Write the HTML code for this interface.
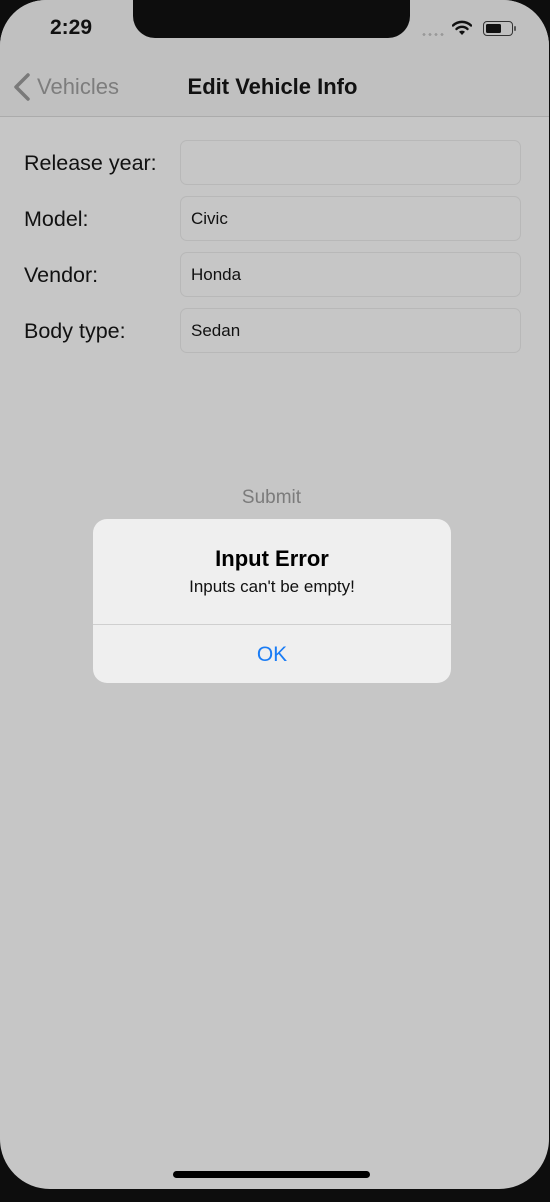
<!DOCTYPE html>
<html><head><style>
body{margin:0;width:550px;height:1202px;background:#0d0d0d;overflow:hidden;position:relative;font-family:"Liberation Sans",sans-serif}
.screen{position:absolute;left:0;top:0;width:549px;height:1189px;background:#c6c6c6;border-radius:46px 46px 50px 50px;overflow:hidden}
.nav{position:absolute;left:0;top:0;width:100%;height:116px;background:#c0c0c0;border-bottom:1px solid #ababab}
.notch{position:absolute;left:133px;top:-10px;width:277px;height:48px;background:#0d0d0d;border-radius:0 0 22px 22px}
.abs{position:absolute}
.lbl{position:absolute;left:24px;font-size:21.5px;color:#111}
.fld{position:absolute;left:180px;width:341px;height:45px;border:1px solid #b8b8b8;border-radius:7px;background:#c6c6c6;font-size:17px;color:#111;line-height:43px;padding-left:10px;box-sizing:border-box}
.alert{position:absolute;left:93px;top:519px;width:358px;height:164px;background:#efefef;border-radius:14px}
</style></head><body>
<div class="screen">
<div class="nav"></div>
<div class="notch"></div>
<div class="abs" style="left:50px;top:16px;font-size:21px;font-weight:bold;color:#111">2:29</div>
<div class="abs" style="left:421px;top:33px;width:24px;height:3px;background-image:radial-gradient(circle,#999 1.3px,transparent 1.5px);background-size:6px 3px"></div>
<svg class="abs" style="left:452px;top:19px" width="20" height="17" viewBox="0 0 20 17"><path d="M1 6.5A13 13 0 0 1 19 6.5" stroke="#111" stroke-width="2.4" fill="none" stroke-linecap="round"/><path d="M4.5 10A8 8 0 0 1 15.5 10" stroke="#111" stroke-width="2.4" fill="none" stroke-linecap="round"/><path d="M10 16L7 12.8A4.3 4.3 0 0 1 13 12.8Z" fill="#111"/></svg>
<div class="abs" style="left:483px;top:21px;width:30px;height:15px;border:1.5px solid #333;border-radius:4px;box-sizing:border-box"></div>
<div class="abs" style="left:486px;top:24px;width:15px;height:9px;background:#111;border-radius:1.5px"></div>
<div class="abs" style="left:514px;top:26px;width:2px;height:5px;background:#555;border-radius:1px"></div>
<svg class="abs" style="left:13px;top:73px" width="18" height="28" viewBox="0 0 18 28"><path d="M15 2L3 14L15 26" stroke="#7a7a7a" stroke-width="3.5" fill="none" stroke-linecap="round" stroke-linejoin="round"/></svg>
<div class="abs" style="left:37px;top:74px;font-size:22px;color:#7d7d7d">Vehicles</div>
<div class="abs" style="left:0;width:545px;text-align:center;top:74px;font-size:22px;font-weight:bold;color:#111">Edit Vehicle Info</div>
<div class="lbl" style="top:151px">Release year:</div><div class="fld" style="top:140px"></div>
<div class="lbl" style="top:207px">Model:</div><div class="fld" style="top:196px">Civic</div>
<div class="lbl" style="top:263px">Vendor:</div><div class="fld" style="top:252px">Honda</div>
<div class="lbl" style="top:319px">Body type:</div><div class="fld" style="top:308px">Sedan</div>
<div class="abs" style="left:0;width:543px;text-align:center;top:487px;font-size:19px;color:#7b7b7b">Submit</div>
<div class="alert">
<div class="abs" style="left:0;width:100%;text-align:center;top:27px;font-size:22px;font-weight:bold;color:#000">Input Error</div>
<div class="abs" style="left:0;width:100%;text-align:center;top:58px;font-size:17px;color:#111">Inputs can't be empty!</div>
<div class="abs" style="left:0;top:105px;width:100%;height:1px;background:#cfcfcf"></div>
<div class="abs" style="left:0;width:100%;text-align:center;top:124px;font-size:21px;color:#1a7cf5">OK</div>
</div>
<div class="abs" style="left:173px;top:1171px;width:197px;height:7px;background:#000;border-radius:4px"></div>
</div>
</body></html>
